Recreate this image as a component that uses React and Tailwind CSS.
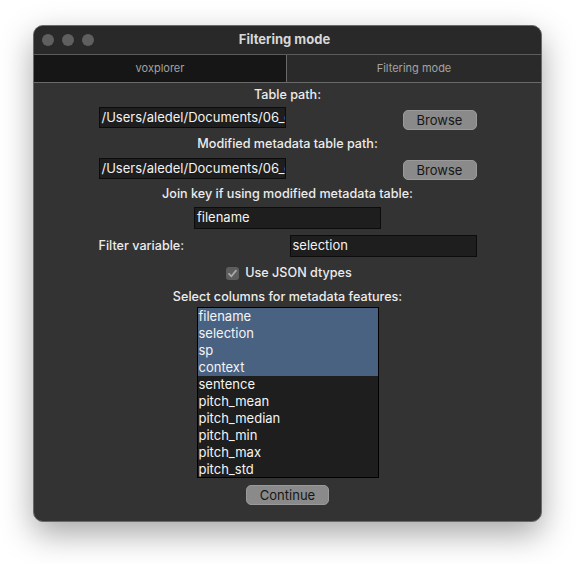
import React from "react";

const columns = [
  { name: "filename", selected: true },
  { name: "selection", selected: true },
  { name: "sp", selected: true },
  { name: "context", selected: true },
  { name: "sentence", selected: false },
  { name: "pitch_mean", selected: false },
  { name: "pitch_median", selected: false },
  { name: "pitch_min", selected: false },
  { name: "pitch_max", selected: false },
  { name: "pitch_std", selected: false },
];

const font = { fontFamily: "Inter, 'Noto Sans', sans-serif" };

const Entry = ({ value, className = "" }) => (
  <div
    className={`h-[21px] bg-[#1e1e1e] border border-[#0c0c0c] text-[13px] leading-[19px] text-[#f2f2f2] pl-[2px] overflow-hidden whitespace-nowrap ${className}`}
  >
    {value}
  </div>
);

const Button = ({ label, className = "" }) => (
  <div
    className={`h-[20px] rounded-[5px] bg-[#8a8a8a] border border-[#9a9a9a] text-[13px] leading-[18px] text-[#161616] text-center ${className}`}
  >
    {label}
  </div>
);

const Label = ({ children, className = "" }) => (
  <div
    className={`h-[16px] leading-[16px] text-[12.6px] font-medium text-[#ececec] text-center whitespace-nowrap ${className}`}
  >
    {children}
  </div>
);

export default function App() {
  return (
    <div
      className="w-[576px] h-[564px] bg-white pl-[33px] pt-[25px]"
      style={font}
    >
      <div className="w-[509px] h-[497px] rounded-[10px] border border-[#6a6a6a] bg-[#333333] overflow-hidden flex flex-col shadow-[0_12px_32px_rgba(0,0,0,0.35)]">
        {/* Title bar */}
        <div className="h-[29px] shrink-0 bg-[#292929] border-b border-[#5c5c5c] flex items-center">
          <div className="flex gap-[8px] pl-[8px]">
            <span className="w-[12px] h-[12px] rounded-full bg-[#5f5f5f]" />
            <span className="w-[12px] h-[12px] rounded-full bg-[#5f5f5f]" />
            <span className="w-[12px] h-[12px] rounded-full bg-[#5f5f5f]" />
          </div>
          <div className="flex-1 text-center text-[13px] font-bold text-[#d8d8d8] pr-[66px]">
            Filtering mode
          </div>
        </div>

        {/* Tabs */}
        <div className="h-[28px] shrink-0 flex border-b border-[#6a6a6a]">
          <div className="w-[253px] bg-[#161616] border-r border-[#6a6a6a] text-[11px] text-[#a3a3a3] flex items-center justify-center">
            voxplorer
          </div>
          <div className="flex-1 bg-[#2a2a2a] text-[11px] text-[#a3a3a3] flex items-center justify-center">
            Filtering mode
          </div>
        </div>

        {/* Content */}
        <div className="flex flex-col items-center">
          <Label className="mt-[4px]">Table path:</Label>
          <div className="w-[378px] h-[28px] flex justify-between items-start">
            <Entry
              value="/Users/aledel/Documents/06_data/metadata.csv"
              className="w-[187px] mt-[4px]"
            />
            <Button label="Browse" className="w-[74px] mt-[7px]" />
          </div>

          <Label className="mt-[5px]">Modified metadata table path:</Label>
          <div className="w-[378px] h-[28px] flex justify-between items-start">
            <Entry
              value="/Users/aledel/Documents/06_data/metadata_mod.csv"
              className="w-[187px] mt-[6px]"
            />
            <Button label="Browse" className="w-[74px] mt-[8px]" />
          </div>

          <Label className="mt-[6px]">
            Join key if using modified metadata table:
          </Label>
          <Entry value="filename" className="w-[187px] h-[22px] mt-[5px]" />

          <div className="w-[378px] flex justify-between items-center mt-[6px]">
            <span className="text-[12.6px] font-medium text-[#ececec]">
              Filter variable:
            </span>
            <Entry value="selection" className="w-[187px] h-[22px]" />
          </div>

          <div className="mt-[8px] h-[16px] flex items-center gap-[6px] pl-[3px]">
            <svg width="13" height="13" viewBox="0 0 13 13">
              <rect x="0" y="0" width="13" height="13" rx="3" fill="#5d5d5d" />
              <path
                d="M3 6.8 L5.4 9.3 L10 3.6"
                fill="none"
                stroke="#a8a8a8"
                strokeWidth="1.8"
                strokeLinecap="round"
                strokeLinejoin="round"
              />
            </svg>
            <span className="text-[12.6px] font-medium text-[#ececec]">
              Use JSON dtypes
            </span>
          </div>

          <Label className="mt-[8px]">
            Select columns for metadata features:
          </Label>

          <div className="mt-[2px] w-[182px] h-[171px] bg-[#1e1e1e] border border-black overflow-hidden">
            {columns.map((c) => (
              <div
                key={c.name}
                className={`h-[17px] leading-[17px] text-[13px] text-[#f4f4f4] pl-[1px] ${
                  c.selected ? "bg-[#4a6282]" : ""
                }`}
              >
                {c.name}
              </div>
            ))}
          </div>

          <Button label="Continue" className="w-[83px] mt-[7px]" />
        </div>
      </div>
    </div>
  );
}
